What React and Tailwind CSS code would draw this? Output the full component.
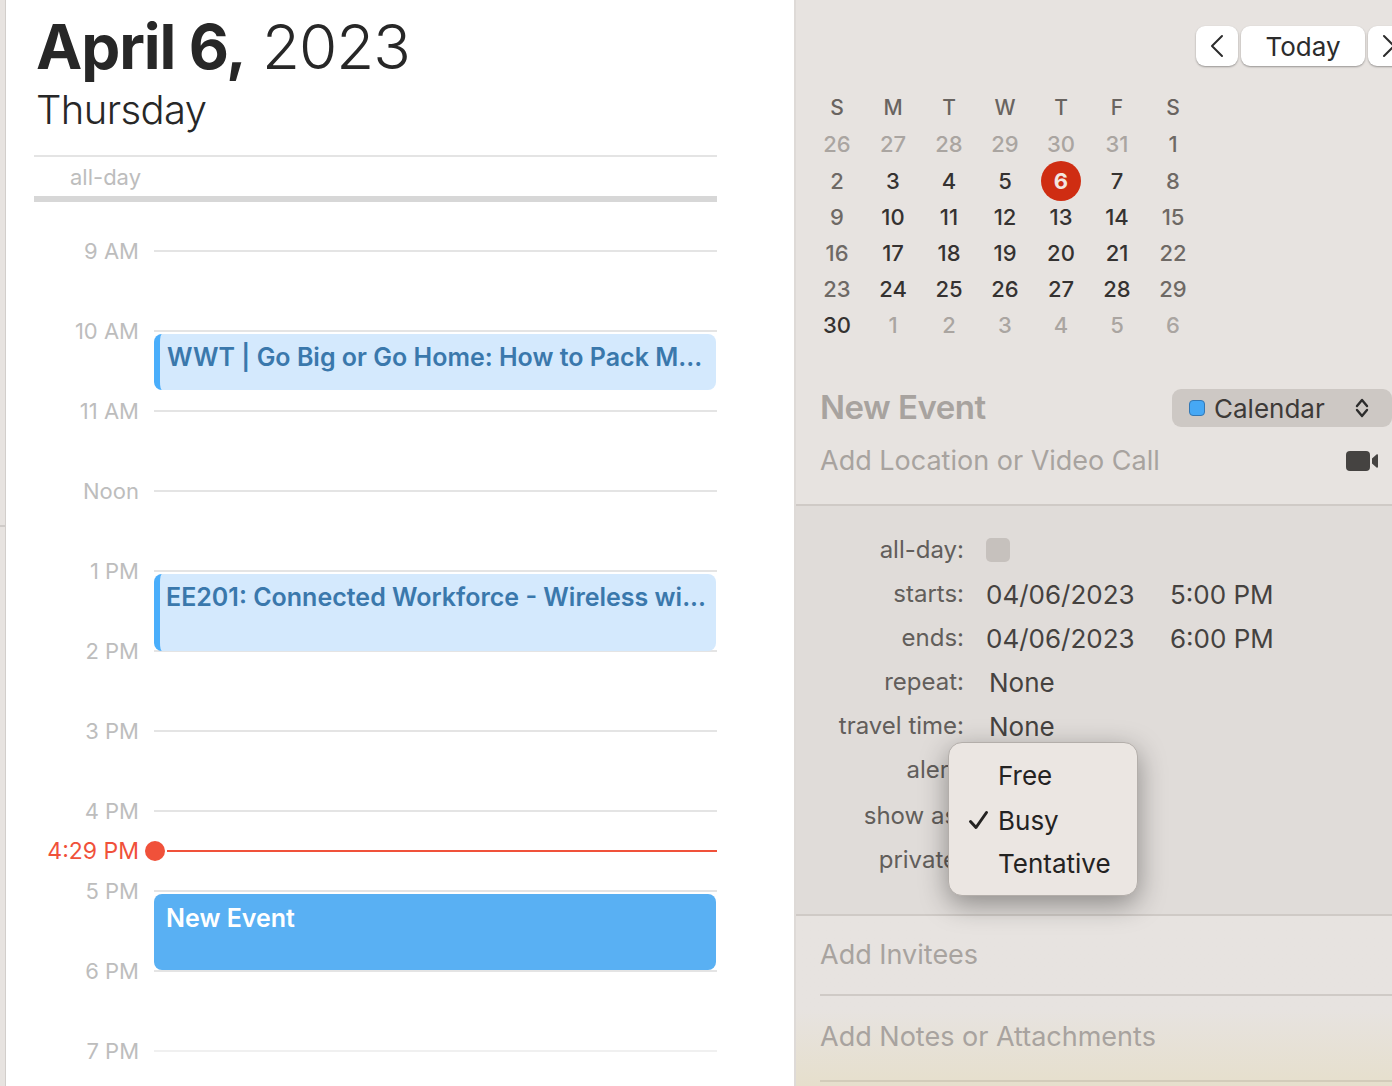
const hours = ['9 AM', '10 AM', '11 AM', 'Noon', '1 PM', '2 PM', '3 PM', '4 PM', '5 PM', '6 PM', '7 PM'];

const days = [
  [['26', 0], ['27', 0], ['28', 0], ['29', 0], ['30', 0], ['31', 0], ['1', 1]],
  [['2', 1], ['3', 2], ['4', 2], ['5', 2], ['6', 3], ['7', 2], ['8', 1]],
  [['9', 1], ['10', 2], ['11', 2], ['12', 2], ['13', 2], ['14', 2], ['15', 1]],
  [['16', 1], ['17', 2], ['18', 2], ['19', 2], ['20', 2], ['21', 2], ['22', 1]],
  [['23', 1], ['24', 2], ['25', 2], ['26', 2], ['27', 2], ['28', 2], ['29', 1]],
  [['30', 2], ['1', 0], ['2', 0], ['3', 0], ['4', 0], ['5', 0], ['6', 0]],
];

const dayColor = ['text-[#aaa5a1]', 'text-[#6e6965]', 'text-[#353231]'];

function MiniCalendar() {
  return (
    <div className="grid grid-cols-7 w-[392px] ml-[13px] mt-[24px] text-[22px] text-center font-medium">
      {['S', 'M', 'T', 'W', 'T', 'F', 'S'].map((d, i) => (
        <div key={i} className="h-[36px] leading-[36px] text-[21px] text-[#696460]">{d}</div>
      ))}
      {days.map((week, w) =>
        week.map(([n, kind], i) => (
          <div key={`${w}-${i}`} className={`${w === 0 ? 'h-[37px]' : 'h-[36px]'} flex items-center justify-center ${dayColor[kind] || ''}`}>
            {kind === 3 ? (
              <span className="w-[40px] h-[40px] shrink-0 rounded-full bg-[#cf2d12] text-[#f3e6e0] font-bold flex items-center justify-center">{n}</span>
            ) : n}
          </div>
        ))
      )}
    </div>
  );
}

function FormRow({ label, children, className = '' }) {
  return (
    <div className={`flex items-center h-[44px] ${className}`}>
      <div className="w-[168px] text-right text-[24px] text-[#625e5b] shrink-0">{label}</div>
      <div className="ml-[22px] flex items-center text-[26px] text-[#454240]">{children}</div>
    </div>
  );
}

function DayView() {
  return (
    <div className="w-[788px] h-full bg-white pl-[28px] relative overflow-hidden">
      <div className="h-[155px] pl-[2px] text-[#272727]">
        <div className="pt-[8px] h-[85px] text-[62px] leading-[78px] tracking-[-1.1px] whitespace-nowrap">
          <span className="font-bold">April 6,</span> <span className="font-light">2023</span>
        </div>
        <div className="h-[50px] text-[40px] leading-[50px] font-light tracking-[-0.6px]">Thursday</div>
      </div>
      <div className="w-[683px] h-[47px] border-t-2 border-[#e4e4e4] border-b-[6px] border-b-[#d7d7d7] pl-[36px] text-[22px] leading-[40px] text-[#bdbdbd]">all-day</div>

      <div className="relative w-[683px] mt-[9px]">
        {hours.map((h, i) => (
          <div key={h} className="flex items-center h-[80px]">
            <div className="w-[105px] text-right text-[22px] text-[#bdbdbd]">{h}</div>
            <div className={`ml-[15px] flex-1 h-[2px] ${i === 10 ? 'bg-[#f0f0f0]' : 'bg-[#e4e4e4]'}`}></div>
          </div>
        ))}

        <div className="absolute left-[120px] top-[123px] w-[562px] h-[56px] rounded-[8px] bg-[#d4e9fd] border-l-[6px] border-[#4aaefb] pl-[7px] text-[25px] leading-[46px] font-semibold text-[#3a78ac] whitespace-nowrap">
          WWT | Go Big or Go Home: How to Pack M...
        </div>
        <div className="absolute left-[120px] top-[363px] w-[562px] h-[77px] rounded-[8px] bg-[#d4e9fd] border-l-[6px] border-[#4aaefb] pl-[6px] text-[25px] leading-[46px] font-semibold text-[#3a78ac] whitespace-nowrap">
          EE201: Connected Workforce - Wireless wi...
        </div>
        <div className="absolute left-[120px] top-[683px] w-[562px] h-[76px] rounded-[8px] bg-[#59b0f3] pl-[12px] text-[25px] leading-[48px] font-semibold text-white">
          New Event
        </div>

        {/* now line */}
        <div className="absolute left-0 top-[628px] w-[683px] h-[24px] flex items-center">
          <div className="w-[105px] text-right text-[23px] text-[#f0513a]">4:29 PM</div>
          <div className="ml-[6px] w-[20px] h-[20px] rounded-full bg-[#f0513a]"></div>
          <div className="ml-[2px] flex-1 h-[2px] bg-[#f0513a]"></div>
        </div>
      </div>
    </div>
  );
}

function Panel() {
  return (
    <div className="flex-1 min-w-0 h-full bg-[#e7e3e0] overflow-hidden border-l-2 border-[#dedad7]">
      {/* top buttons */}
      <div className="flex gap-[3px] pt-[26px] pl-[400px] w-[640px]">
        <button className="w-[42px] h-[40px] rounded-[9px] bg-white shadow-[0_1px_2px_rgba(0,0,0,0.35)] flex items-center justify-center shrink-0">
          <svg width="14" height="24" viewBox="0 0 14 24" fill="none" stroke="#2c2c2c" strokeWidth="2" strokeLinecap="round" strokeLinejoin="round"><path d="M12 2 2 12l10 10" /></svg>
        </button>
        <button className="w-[124px] h-[40px] rounded-[9px] bg-white shadow-[0_1px_2px_rgba(0,0,0,0.35)] text-[26px] text-[#2c2c2c] shrink-0">Today</button>
        <button className="w-[42px] h-[40px] rounded-[9px] bg-white shadow-[0_1px_2px_rgba(0,0,0,0.35)] flex items-center justify-center shrink-0">
          <svg width="14" height="24" viewBox="0 0 14 24" fill="none" stroke="#2c2c2c" strokeWidth="2" strokeLinecap="round" strokeLinejoin="round"><path d="M2 2l10 10L2 22" /></svg>
        </button>
      </div>

      <MiniCalendar />

      {/* title + calendar picker */}
      <div className="flex items-center h-[38px] mt-[46px] pl-[24px]">
        <div className="w-[384px] text-[33px] font-semibold tracking-[-0.5px] text-[#a8a39f]">New Event</div>
        <div className="w-[220px] h-[38px] shrink-0 rounded-[9px] bg-[#cdc8c4] flex items-center pl-[17px] text-[26px] text-[#3d3a38]">
          <span className="w-[16px] h-[16px] rounded-[4px] bg-[#46a8f5] border border-[#3478b4] mr-[9px] shrink-0"></span>
          Calendar
          <svg className="ml-[30px] shrink-0" width="14" height="24" viewBox="0 0 14 24" fill="none" stroke="#2c2c2c" strokeWidth="2.4" strokeLinecap="round" strokeLinejoin="round"><path d="M2 10l5-6 5 6M2 14l5 6 5-6" /></svg>
        </div>
      </div>
      <div className="flex items-center h-[36px] mt-[16px] pl-[24px]">
        <div className="w-[526px] text-[27px] text-[#a8a39f] whitespace-nowrap">Add Location or Video Call</div>
        <svg width="32" height="20" viewBox="0 0 32 20" className="shrink-0" fill="#454341">
          <rect x="0" y="0" width="24" height="20" rx="4" />
          <path d="M26 7.5 30.5 3.5c.6-.5 1.5-.1 1.5.7v11.6c0 .8-.9 1.2-1.5.7L26 12.500z" />
        </svg>
      </div>

      {/* details */}
      <div className="relative mt-[25px] h-[412px] bg-[#e0dcd9] border-y-2 border-[#cfcac6] pt-[22px]">
        <FormRow label="all-day:">
          <span className="w-[24px] h-[24px] rounded-[5px] bg-[#c6c1bd]"></span>
        </FormRow>
        <FormRow label="starts:">
          <span className="w-[184px]">04/06/2023</span><span>5:00 PM</span>
        </FormRow>
        <FormRow label="ends:">
          <span className="w-[184px]">04/06/2023</span><span>6:00 PM</span>
        </FormRow>
        <FormRow label="repeat:"><span className="ml-[3px]">None</span></FormRow>
        <FormRow label="travel time:"><span className="ml-[3px]">None</span></FormRow>
        <FormRow label="alert:"></FormRow>
        <FormRow label="show as:" className="mt-[2px]"></FormRow>
        <FormRow label="private:"></FormRow>

        {/* status menu */}
        <div className="absolute left-[152px] top-[236px] w-[190px] h-[154px] rounded-[14px] bg-[#ebe6e2] border border-[#b3aeaa] shadow-[0_8px_28px_rgba(0,0,0,0.38)] pt-[11px] text-[26px] text-[#242322]">
          <div className="h-[44px] leading-[44px] pl-[49px]">Free</div>
          <div className="h-[44px] flex items-center">
            <svg className="ml-[19px] mr-[9px] shrink-0" width="21" height="20" viewBox="0 0 21 20" fill="none" stroke="#242322" strokeWidth="3" strokeLinecap="round" strokeLinejoin="round"><path d="M2.500 11.500 8 17.500 18.500 2.500" /></svg>
            Busy
          </div>
          <div className="h-[44px] leading-[44px] pl-[49px]">Tentative</div>
        </div>
      </div>

      {/* bottom rows */}
      <div className="h-[170px] bg-gradient-to-b from-[#e7e3e0] from-55% to-[#e6dfcc] pl-[24px] text-[27px] text-[#a8a39f]">
        <div className="h-[80px] leading-[78px] border-b-2 border-[#cfcac6]">Add Invitees</div>
        <div className="h-[86px] leading-[82px] border-b-2 border-[#d3ccba]">Add Notes or Attachments</div>
      </div>
    </div>
  );
}

export default function App() {
  return (
    <div className="w-[1392px] h-[1086px] flex overflow-hidden bg-white" style={{ fontFamily: 'Inter, "Liberation Sans", sans-serif' }}>
      <div className="w-[6px] shrink-0 h-full bg-[#e7e3e0] border-r border-[#d2cecb]">
        <div className="h-[527px] border-b-2 border-[#cfcbc8]"></div>
      </div>
      <DayView />
      <Panel />
    </div>
  );
}
